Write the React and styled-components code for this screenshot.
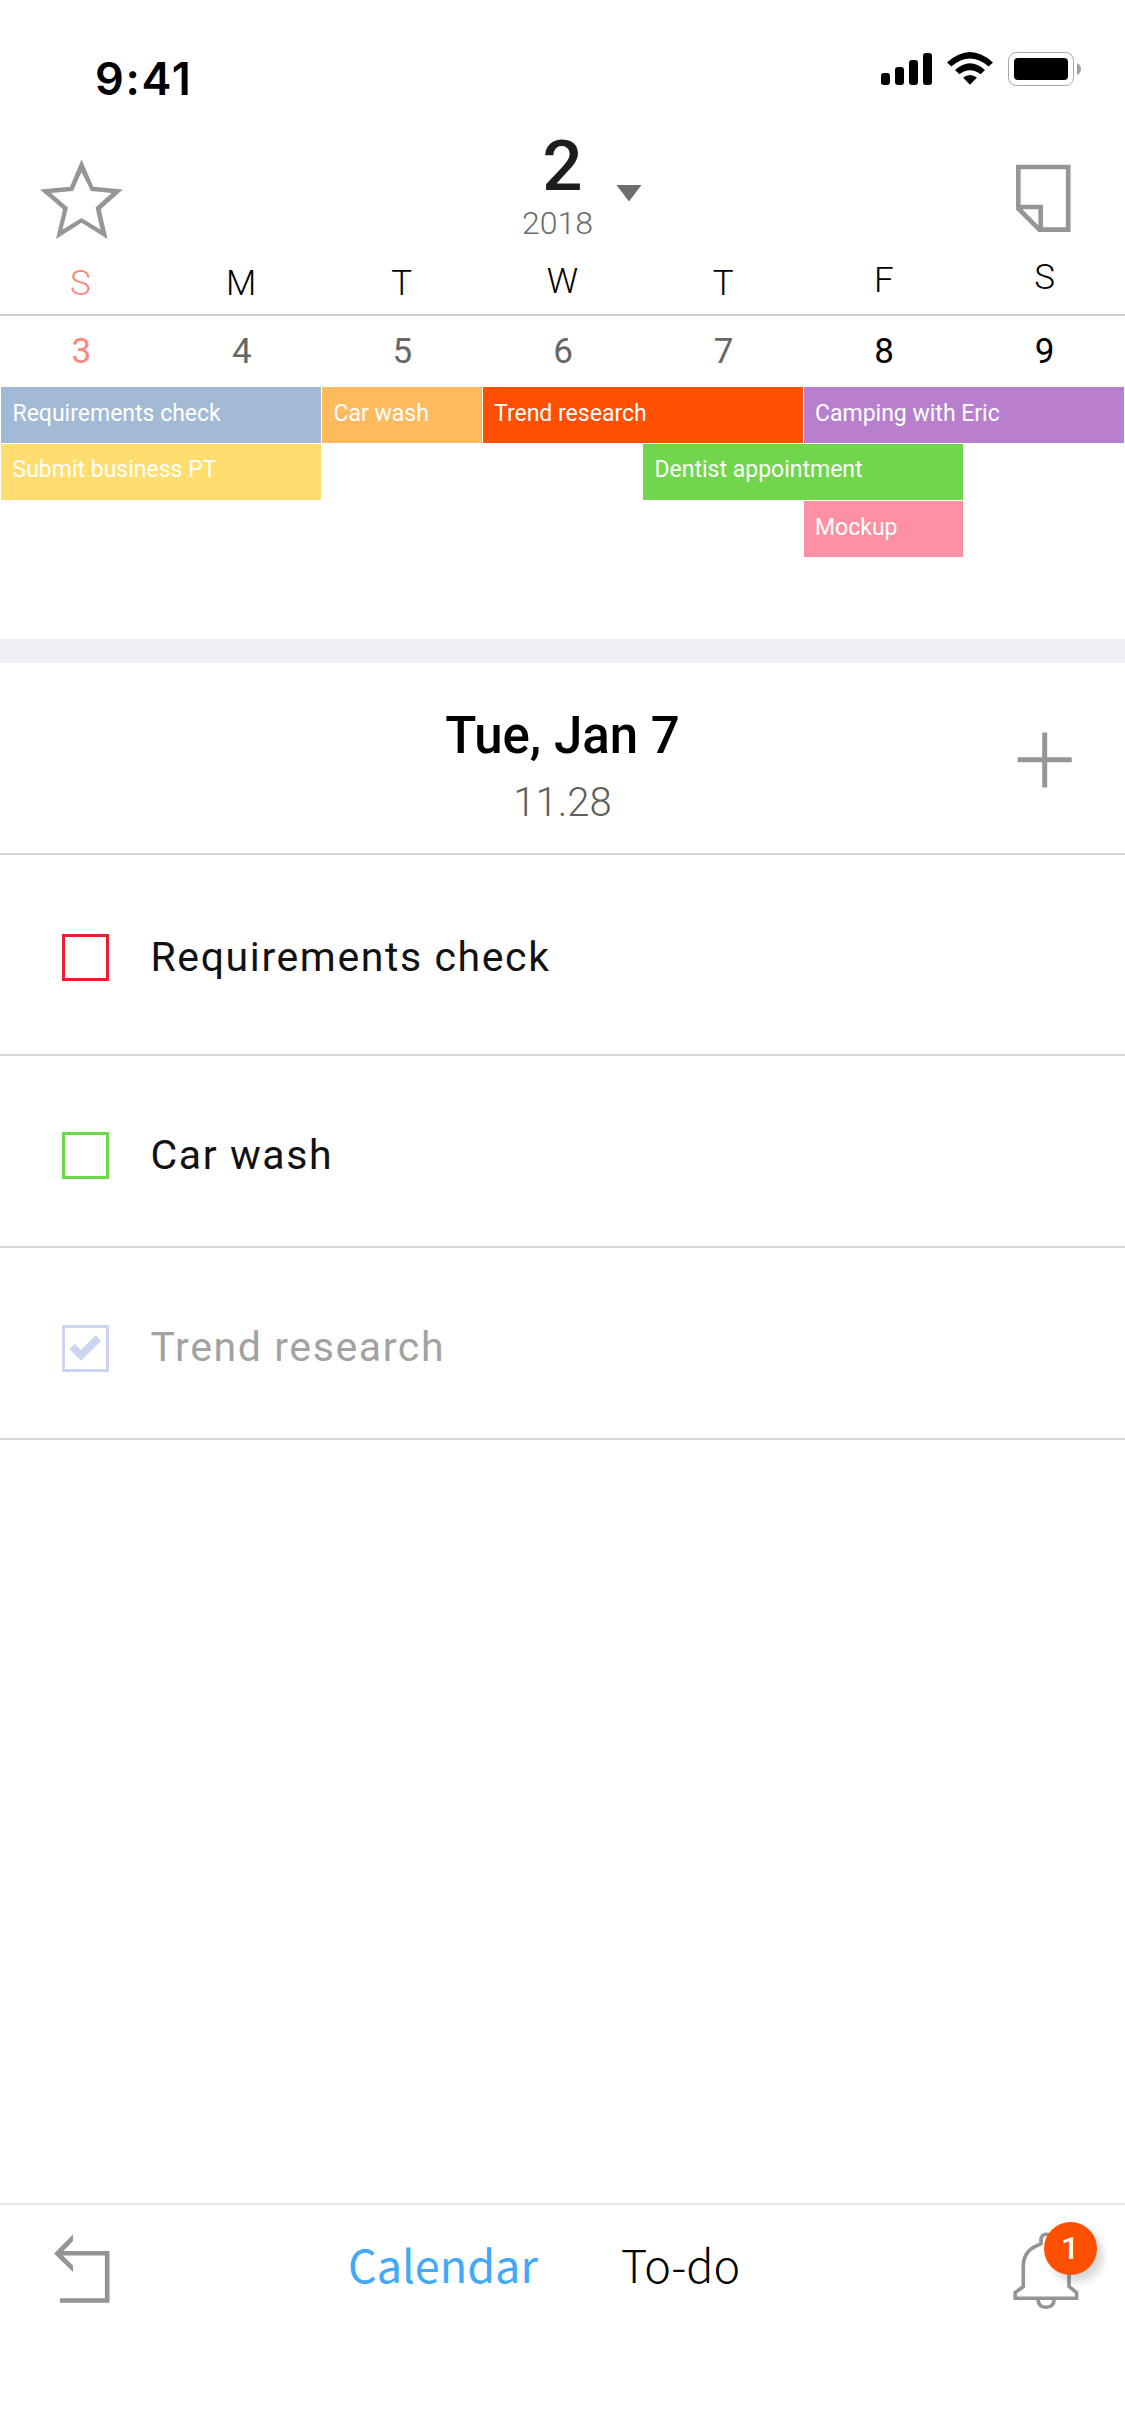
import React from "react";
import styled, { createGlobalStyle } from "styled-components";

const GlobalStyle = createGlobalStyle`
  *, *::before, *::after { box-sizing: border-box; }
  body { margin: 0; background: #fff; }
`;

const Screen = styled.main`
  display: flex;
  flex-direction: column;
  width: 1125px;
  height: 2436px;
  overflow: hidden;
  background: #fff;
  color: #000;
  font-family: Roboto, "Liberation Sans", sans-serif;
`;

const StatusBar = styled.header`
  display: flex;
  justify-content: space-between;
  height: 120px;
  padding: 49px 43px 0 95px;
`;

const Clock = styled.time`
  font: 600 45px/60px Inter, "Liberation Sans", sans-serif;
  letter-spacing: 1.7px;
`;

const StatusGroup = styled.div`
  display: flex;
  height: 38px;
`;

const Signals = styled.svg`
  width: 127px;
  height: 38px;
`;

const BatterySlot = styled.span`
  padding-top: 2px;
  line-height: 0;
`;

const Header = styled.section`
  display: grid;
  grid-template-columns: 1fr 90px 1fr;
  height: 130px;
`;

const HeaderLeft = styled.div`
  padding: 38px 0 0 38px;
`;

const MonthTitle = styled.div`
  display: flex;
  flex-direction: column;
  align-items: center;
  padding-top: 10px;
`;

const Month = styled.span`
  font-size: 71px;
  font-weight: 500;
  line-height: 72px;
  color: #1d1d1b;
`;

const Year = styled.span`
  margin: 5px 10px 0 0;
  font-size: 32px;
  font-weight: 300;
  line-height: 32px;
  color: #6c6c6c;
`;

const HeaderRight = styled.div`
  display: flex;
  justify-content: space-between;
  padding: 44px 53px 0 8px;
`;

const CaretSlot = styled.span`
  padding-top: 21px;
  line-height: 0;
`;

const Week = styled.div`
  display: grid;
  grid-template-columns: repeat(7, 1fr);
  align-items: end;
  height: 66px;
  padding-bottom: 10px;
  border-bottom: 2px solid #d0d0d0;
`;

const Weekday = styled.span`
  margin-bottom: ${(p) => p.$lift || 0}px;
  font-size: 35px;
  font-weight: 300;
  line-height: 40px;
  text-align: center;
  color: ${(p) => (p.$sunday ? "#ff867c" : "#000")};
`;

const Dates = styled.div`
  display: grid;
  grid-template-columns: repeat(7, 1fr);
  height: 71px;
  padding: 16px 0 0 1px;
`;

const DateCell = styled.span`
  font-size: 35px;
  line-height: 40px;
  text-align: center;
  color: ${(p) => p.$color};
`;

const Events = styled.div`
  display: grid;
  grid-template-columns: repeat(7, 159.5px);
  grid-auto-rows: 56px;
  gap: 1px;
  height: 252px;
  padding-left: 1px;
`;

const Event = styled.div`
  display: flex;
  align-items: center;
  grid-row: ${(p) => p.$row};
  grid-column: ${(p) => p.$start} / span ${(p) => p.$span};
  padding: 0 0 ${(p) => (p.$row === 2 ? 4 : 2)}px 11.5px;
  background: ${(p) => p.$color};
  color: #fff;
  font-size: 23px;
  line-height: 30px;
  white-space: nowrap;
`;

const Band = styled.div`
  height: 24px;
  background: #efeef4;
`;

const DayHeader = styled.section`
  display: grid;
  grid-template-columns: 1fr auto 1fr;
  height: 192px;
  border-bottom: 2px solid #d6d6d6;
`;

const DayTitle = styled.div`
  grid-column: 2;
  display: flex;
  flex-direction: column;
  align-items: center;
  padding-top: 43px;
`;

const DayName = styled.h1`
  margin: 0;
  font-size: 51px;
  font-weight: 500;
  line-height: 60px;
`;

const DaySub = styled.span`
  margin-top: 17px;
  font-size: 40px;
  font-weight: 300;
  line-height: 40px;
  color: #5f5f5f;
`;

const AddButton = styled.button`
  justify-self: end;
  align-self: start;
  margin: 69px 52px 0 0;
  padding: 0;
  border: 0;
  background: none;
  line-height: 0;
`;

const Task = styled.label`
  display: flex;
  height: ${(p) => p.$height}px;
  padding: ${(p) => p.$top}px 0 0 62px;
  border-bottom: 2px solid #d8d8d8;
`;

const Box = styled.span`
  display: flex;
  align-items: center;
  justify-content: center;
  width: 47px;
  height: 47px;
  border: 3px solid ${(p) => p.$color};
`;

const TaskName = styled.span`
  margin-left: 41.5px;
  font-size: 41px;
  line-height: ${(p) => (p.$done ? 44 : 46)}px;
  letter-spacing: 1.6px;
  color: ${(p) => (p.$done ? "#a2a2a2" : "#111")};
`;

const Footer = styled.footer`
  display: flex;
  align-items: flex-start;
  height: 233px;
  margin-top: auto;
  border-top: 2px solid #e5e5e5;
`;

const BackButton = styled.button`
  width: 348px;
  padding: 29px 0 0 52px;
  border: 0;
  background: none;
  text-align: left;
  line-height: 0;
`;

const Tab = styled.a`
  width: ${(p) => p.$width}px;
  padding-top: 27px;
  font: ${(p) => (p.$active ? 400 : 300)} 45px/64px "Noto Sans CJK KR", "Noto Sans", sans-serif;
  color: ${(p) => (p.$active ? "#42a9f8" : "#000")};
`;

const Alerts = styled.div`
  position: relative;
  width: 68px;
  margin: 26px 44px 0 auto;
  line-height: 0;
`;

const Badge = styled.span`
  position: absolute;
  left: 31px;
  top: -9px;
  width: 53px;
  height: 53px;
  padding-right: 1px;
  border-radius: 50%;
  background: #ff4f00;
  box-shadow: 6px 7px 8px rgba(0, 0, 0, 0.16);
  color: #fff;
  font-size: 32px;
  font-weight: 500;
  line-height: 53px;
  text-align: center;
`;

const SignalIcons = () => (
  <Signals viewBox="880 49 127 38">
    <rect x="881" y="73" width="9" height="12" rx="3" />
    <rect x="895" y="67" width="9" height="18" rx="3" />
    <rect x="909" y="60" width="9" height="25" rx="3" />
    <rect x="923" y="53" width="9" height="32" rx="3" />
    <path d="M947 62.500Q970 41.500 993 62.500L988.600 66.500Q970 50.500 951.400 66.500Z" />
    <path d="M955 70Q970 56.500 985 70L980.600 74.300Q970 66 959.400 74.300Z" />
    <path d="M963 77.500Q970 72.500 977 77.500L970 84.700Z" />
  </Signals>
);

const BatteryIcon = () => (
  <svg width="75" height="36" viewBox="1007 51 75 36">
    <rect x="1008.500" y="52.500" width="65" height="33" rx="8" fill="none" stroke="#a6a6a6" strokeWidth="1" />
    <rect x="1014" y="58" width="54" height="22" rx="4" />
    <path d="M1077 63Q1081 65 1081 69T1077 75Z" fill="#a0a0a0" />
  </svg>
);

const StarIcon = () => (
  <svg width="88" height="84" viewBox="38 158 88 84">
    <path
      fill="#969696"
      fillRule="evenodd"
      d="M81.500 159.500L93.300 186.800L122.800 189.500L100.700 209.300L107.500 239L81.500 222.700L56 239L63 209.300L40 189.500L70 186.800ZM81.500 172L73 191L51 193L68 207.500L62.500 229.500L81.500 218L100.500 229.500L95.500 207.500L111.500 193L91 191Z"
    />
  </svg>
);

const CaretIcon = () => (
  <svg width="26" height="18" viewBox="0 0 26 18">
    <path fill="#6d6d6d" d="M0.500 0H25.500L13 16.500Z" />
  </svg>
);

const NoteIcon = () => (
  <svg width="56" height="70" viewBox="1016 164 56 70">
    <path
      fill="none"
      stroke="#969696"
      strokeWidth="4.700"
      d="M1040 229.600H1068.200V167H1018.300V208.500L1039.400 229.600ZM1018.300 207H1040.700V229.600"
    />
  </svg>
);

const PlusIcon = () => (
  <svg width="56" height="56" viewBox="0 0 56 56">
    <path d="M27.700 0.500V55.500M0.700 27.700H54.700" stroke="#969696" strokeWidth="5" />
  </svg>
);

const CheckIcon = ({ color }) => (
  <svg width="33" height="27" viewBox="0 0 33 27">
    <path fill="none" stroke={color} strokeWidth="7.600" d="M3 11.500L12 20.500L29.500 3" />
  </svg>
);

const BackIcon = () => (
  <svg width="60" height="72" viewBox="52 2234 60 72">
    <path fill="none" stroke="#949494" strokeWidth="4.600" d="M60 2300.500H107.200V2253.300H57" />
    <path fill="#949494" d="M54 2253.500L73 2234.500V2241L61 2253.500L73 2265.500V2272Z" />
  </svg>
);

const BellIcon = () => (
  <svg width="68" height="78" viewBox="1013 2231 68 78" fill="none" stroke="#949494" strokeWidth="3.600">
    <path d="M1041 2245V2240Q1041 2234.200 1046.500 2234.200Q1052 2234.200 1052 2240V2245Q1069 2251 1069 2266V2286.500L1076.600 2292.600V2298.300H1015.200V2292.600L1023.300 2286.500V2266Q1023.300 2249.500 1041 2244Z" />
    <path d="M1038 2299.500Q1038.500 2307.200 1046 2307.200Q1053.700 2307.200 1054.200 2299.500" />
  </svg>
);

const weekdays = [["S"], ["M"], ["T"], ["W", 2], ["T"], ["F", 3], ["S", 6]];
const dates = [3, 4, 5, 6, 7, 8, 9];
const events = [
  { name: "Requirements check", row: 1, start: 1, span: 2, color: "#a2bad5" },
  { name: "Car wash", row: 1, start: 3, span: 1, color: "#ffba5e" },
  { name: "Trend research", row: 1, start: 4, span: 2, color: "#ff4f00" },
  { name: "Camping with Eric", row: 1, start: 6, span: 2, color: "#b97fcf" },
  { name: "Submit business PT", row: 2, start: 1, span: 2, color: "#ffde6f" },
  { name: "Dentist appointment", row: 2, start: 5, span: 2, color: "#70d64b" },
  { name: "Mockup", row: 3, start: 6, span: 1, color: "#fd91a3" },
];
const tasks = [
  { name: "Requirements check", color: "#ee1c2e", height: 201, top: 79 },
  { name: "Car wash", color: "#70d64b", height: 192, top: 76 },
  { name: "Trend research", color: "#ccd4f2", height: 192, top: 77, done: true },
];

const dateColor = (d) => (d === 3 ? "#ff867c" : d > 7 ? "#000" : "#666");

export default function App() {
  return (
    <Screen>
      <GlobalStyle />
      <StatusBar>
        <Clock>9:41</Clock>
        <StatusGroup>
          <SignalIcons />
          <BatterySlot>
            <BatteryIcon />
          </BatterySlot>
        </StatusGroup>
      </StatusBar>

      <Header>
        <HeaderLeft>
          <StarIcon />
        </HeaderLeft>
        <MonthTitle>
          <Month>2</Month>
          <Year>2018</Year>
        </MonthTitle>
        <HeaderRight>
          <CaretSlot>
            <CaretIcon />
          </CaretSlot>
          <NoteIcon />
        </HeaderRight>
      </Header>

      <Week>
        {weekdays.map(([name, lift], i) => (
          <Weekday key={i} $lift={lift} $sunday={i === 0}>
            {name}
          </Weekday>
        ))}
      </Week>
      <Dates>
        {dates.map((d) => (
          <DateCell key={d} $color={dateColor(d)}>
            {d}
          </DateCell>
        ))}
      </Dates>
      <Events>
        {events.map((e) => (
          <Event key={e.name} $row={e.row} $start={e.start} $span={e.span} $color={e.color}>
            {e.name}
          </Event>
        ))}
      </Events>
      <Band />

      <DayHeader>
        <DayTitle>
          <DayName>Tue, Jan 7</DayName>
          <DaySub>11.28</DaySub>
        </DayTitle>
        <AddButton aria-label="Add">
          <PlusIcon />
        </AddButton>
      </DayHeader>

      {tasks.map((t) => (
        <Task key={t.name} $height={t.height} $top={t.top}>
          <Box $color={t.color}>{t.done && <CheckIcon color={t.color} />}</Box>
          <TaskName $done={t.done}>{t.name}</TaskName>
        </Task>
      ))}

      <Footer>
        <BackButton aria-label="Back">
          <BackIcon />
        </BackButton>
        <Tab $active $width={273}>
          Calendar
        </Tab>
        <Tab $width={150}>To-do</Tab>
        <Alerts>
          <BellIcon />
          <Badge>1</Badge>
        </Alerts>
      </Footer>
    </Screen>
  );
}
